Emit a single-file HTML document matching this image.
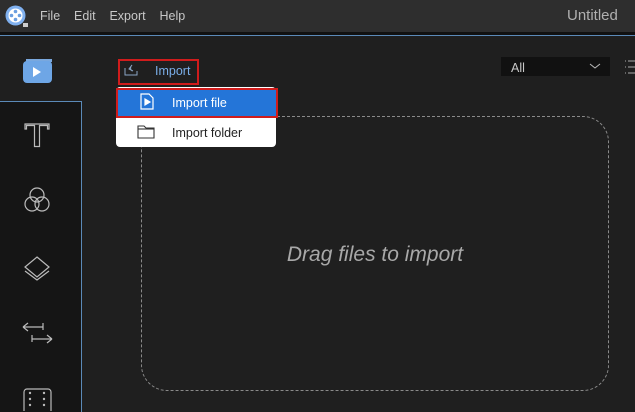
<!DOCTYPE html>
<html><head><style>
body{margin:0;width:635px;height:411px;overflow:hidden;background:#1f1f1f;font-family:"Liberation Sans",sans-serif;position:relative}
.a{position:absolute}
</style></head><body>
<div class="a" style="left:0;top:0;width:635px;height:32px;background:#2e2e2e"></div>
<div class="a" style="left:0;top:32px;width:635px;height:3px;background:#111"></div>
<div class="a" style="left:0;top:35px;width:635px;height:1px;background:#5b8ab8"></div>
<svg class="a" style="left:4px;top:4px" width="24" height="24" viewBox="0 0 24 24"><circle cx="11.5" cy="11.5" r="10" fill="#7fb0ef"/><circle cx="11.5" cy="11.5" r="7" fill="#fff"/><circle cx="11.5" cy="7.5" r="1.8" fill="#6a9ee0"/><circle cx="11.5" cy="15.5" r="1.8" fill="#6a9ee0"/><circle cx="7.5" cy="11.5" r="1.8" fill="#6a9ee0"/><circle cx="15.5" cy="11.5" r="1.8" fill="#6a9ee0"/><rect x="19" y="19" width="5" height="4" fill="#ccc"/></svg>
<div class="a" style="left:40px;top:9px;font-size:12.5px;color:#c8c8c8">File&nbsp;&nbsp;&nbsp;&nbsp;Edit&nbsp;&nbsp;&nbsp;&nbsp;Export&nbsp;&nbsp;&nbsp;&nbsp;Help</div>
<div class="a" style="left:567px;top:7px;font-size:15px;color:#b0b0b0">Untitled</div>
<div class="a" style="left:26px;top:59px;width:26px;height:3px;background:#7aa8de"></div>
<div class="a" style="left:23px;top:61px;width:29px;height:22px;background:#6ea6e6;border-radius:4px"></div>
<svg class="a" style="left:32px;top:66px" width="10" height="12"><path d="M1 1L9 6L1 11Z" fill="#fff"/></svg>
<div class="a" style="left:0;top:101px;width:81px;height:310px;background:#151515;border-top:1px solid #5b8ab8;border-right:1px solid #5b8ab8"></div>
<svg class="a" style="left:0;top:100px" width="81" height="311" fill="none" stroke="#bbb" stroke-width="1.2">
<path d="M25 24h24v5h-1.5v-3.5h-8v21h-5v-21h-8v3.5H25z"/>
<circle cx="37" cy="95" r="7"/><circle cx="32" cy="104" r="7"/><circle cx="42" cy="104" r="7"/>
<path d="M37 157l12 10-12 10-12-10z"/><path d="M25 171l12 9 12-9"/>
<path d="M23 227h20M23 227l5-4M23 227l5 4M43 223v7M32 239h20M52 239l-5-4M52 239l-5 4M32 235v7"/>
<rect x="24" y="289" width="27" height="26" rx="3"/>
<g fill="#bbb" stroke="none"><circle cx="30" cy="293" r="1.2"/><circle cx="44" cy="293" r="1.2"/><circle cx="30" cy="299" r="1.2"/><circle cx="44" cy="299" r="1.2"/><circle cx="30" cy="305" r="1.2"/><circle cx="44" cy="305" r="1.2"/></g>
</svg>
<div class="a" style="left:118px;top:59px;width:77px;height:22px;border:2px solid #d01c1c"></div>
<svg class="a" style="left:123px;top:63px" width="16" height="14" fill="none" stroke="#8aa5c5" stroke-width="1"><path d="M2 5v7h12V8M9 2L6 6l4 2M9 2c-2 2-2 4 0 6"/></svg>
<div class="a" style="left:155px;top:64px;font-size:12.5px;color:#7aaee8">Import</div>
<div class="a" style="left:501px;top:57px;width:109px;height:19px;background:#111"></div>
<div class="a" style="left:511px;top:61px;font-size:12.5px;color:#c8c8c8">All</div>
<svg class="a" style="left:589px;top:62px" width="12" height="8"><path d="M1 2l5 4 5-4" stroke="#bbb" fill="none"/></svg>
<svg class="a" style="left:624px;top:59px" width="11" height="16" stroke="#aaa"><path d="M1 2h1M1 8h1M1 14h1M4 2h7M4 8h7M4 14h7"/></svg>
<div class="a" style="left:141px;top:116px;width:466px;height:273px;border:1px dashed #8a8a8a;border-radius:26px"></div>
<div class="a" style="left:141px;top:243px;width:468px;text-align:center;font-size:21px;font-style:italic;color:#a8a8a8">Drag files to import</div>
<div class="a" style="left:116px;top:87px;width:160px;height:60px;background:#fff;border-radius:4px"></div>
<div class="a" style="left:116px;top:88px;width:158px;height:26px;background:#2475d8;border:2px solid #d01c1c"></div>
<svg class="a" style="left:139px;top:93px" width="16" height="18" fill="none" stroke="#fff" stroke-width="1.2"><path d="M2 1h8l4 4v11H2z"/><path d="M6 6l5 3-5 3z" fill="#fff"/></svg>
<div class="a" style="left:172px;top:96px;font-size:12.5px;color:#fff">Import file</div>
<svg class="a" style="left:137px;top:124px" width="18" height="15" fill="none" stroke="#333" stroke-width="1.1"><path d="M1 2h6l2 2h8v10H1z"/><path d="M1 5h16"/></svg>
<div class="a" style="left:172px;top:126px;font-size:12.5px;color:#222">Import folder</div>
</body></html>
